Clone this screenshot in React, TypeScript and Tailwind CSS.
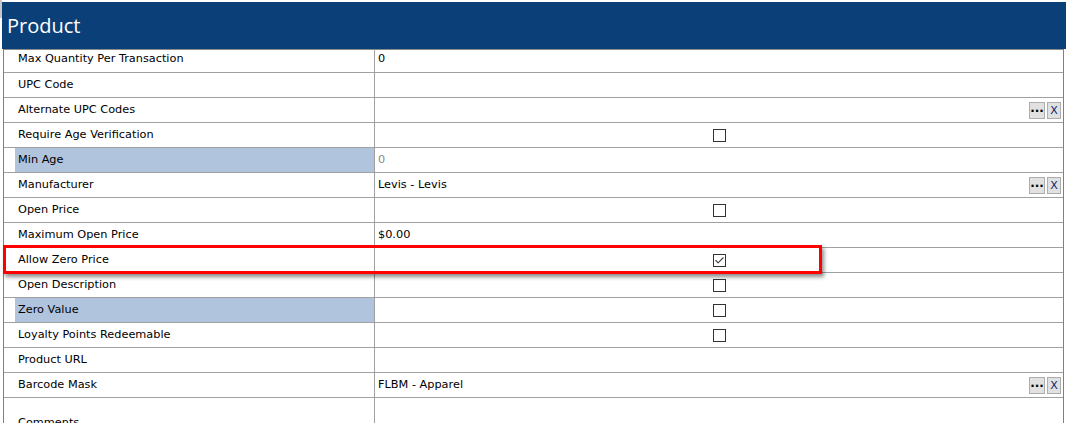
import { Check } from "lucide-react";

type Row = {
  label: string;
  value?: string;
  kind?: "text" | "check" | "lookup";
  checked?: boolean;
  highlight?: boolean;
  muted?: boolean;
};

const rows: Row[] = [
  { label: "UPC Code" },
  { label: "Alternate UPC Codes", kind: "lookup" },
  { label: "Require Age Verification", kind: "check" },
  { label: "Min Age", value: "0", highlight: true, muted: true },
  { label: "Manufacturer", value: "Levis - Levis", kind: "lookup" },
  { label: "Open Price", kind: "check" },
  { label: "Maximum Open Price", value: "$0.00" },
  { label: "Allow Zero Price", kind: "check", checked: true },
  { label: "Open Description", kind: "check" },
  { label: "Zero Value", kind: "check", highlight: true },
  { label: "Loyalty Points Redeemable", kind: "check" },
  { label: "Product URL" },
  { label: "Barcode Mask", value: "FLBM - Apparel", kind: "lookup" },
];

function Box({ checked }: { checked?: boolean }) {
  return (
    <div className="w-[13px] h-[13px] border border-[#333333] bg-white flex items-center justify-center">
      {checked && <Check size={11} strokeWidth={2.5} className="text-[#444444]" />}
    </div>
  );
}

function LookupButtons() {
  return (
    <div className="flex gap-[2px] pr-[2px]">
      <div className="w-[16px] h-[17px] bg-[#e1e1e1] border border-[#adadad] flex items-center justify-center text-[12px] font-bold leading-none pb-[4px]">
        ...
      </div>
      <div className="w-[14px] h-[17px] bg-[#e1e1e1] border border-[#adadad] flex items-center justify-center text-[11px] leading-none text-[#0a246a]">
        X
      </div>
    </div>
  );
}

function PropRow({ row }: { row: Row }) {
  return (
    <div className="grid grid-cols-[370px_1fr] h-[25px] border-b border-[#a0a0a0]">
      <div className="pl-[11px] flex">
        <div className={`flex-1 flex items-center pl-[3px] ${row.highlight ? "bg-[#b0c4de]" : ""}`}>
          {row.label}
        </div>
      </div>
      <div className="border-l border-[#a0a0a0] flex items-center">
        {row.kind === "check" ? (
          <div className="flex-1 flex justify-center">
            <Box checked={row.checked} />
          </div>
        ) : (
          <>
            <div className={`flex-1 pl-[3px] ${row.muted ? "text-[#8a8a8a]" : ""}`}>{row.value}</div>
            {row.kind === "lookup" && <LookupButtons />}
          </>
        )}
      </div>
    </div>
  );
}

export default function App() {
  return (
    <div className="relative w-[1066px] h-[423px] overflow-hidden bg-white text-[11.3px] text-black font-['DejaVu_Sans',sans-serif]">
      <div className="absolute left-0 top-0 w-[2px] h-[18px] bg-[#c8c8c8]" />
      <div className="ml-[2px] mt-[2px] h-[47px] bg-[#0b3f78] text-white flex items-center pl-[5px] text-[20px] font-['Open_Sans',sans-serif]">
        Product
      </div>

      {/* property grid */}
      <div className="ml-[3px] mr-[2px] border-l border-r border-t border-l-[#808080] border-r-[#808080] border-t-[#8a8a8a]">
        <div className="grid grid-cols-[370px_1fr] h-[23px] border-b border-[#a0a0a0]">
          <div className="pl-[14px] flex items-center pb-[3px]">Max Quantity Per Transaction</div>
          <div className="border-l border-[#a0a0a0] pl-[3px] flex items-center pb-[3px]">0</div>
        </div>
        {rows.map((r) => (
          <PropRow key={r.label} row={r} />
        ))}
        <div className="grid grid-cols-[370px_1fr] h-[50px]">
          <div className="pl-[14px] flex items-center">Comments</div>
          <div className="border-l border-[#a0a0a0]" />
        </div>
      </div>

      {/* red callout */}
      <div className="absolute left-[3px] top-[245px] w-[819px] h-[29px] border-[3px] border-[#ff0000] shadow-[2px_3px_4px_rgba(0,0,0,0.45)]" />
    </div>
  );
}
